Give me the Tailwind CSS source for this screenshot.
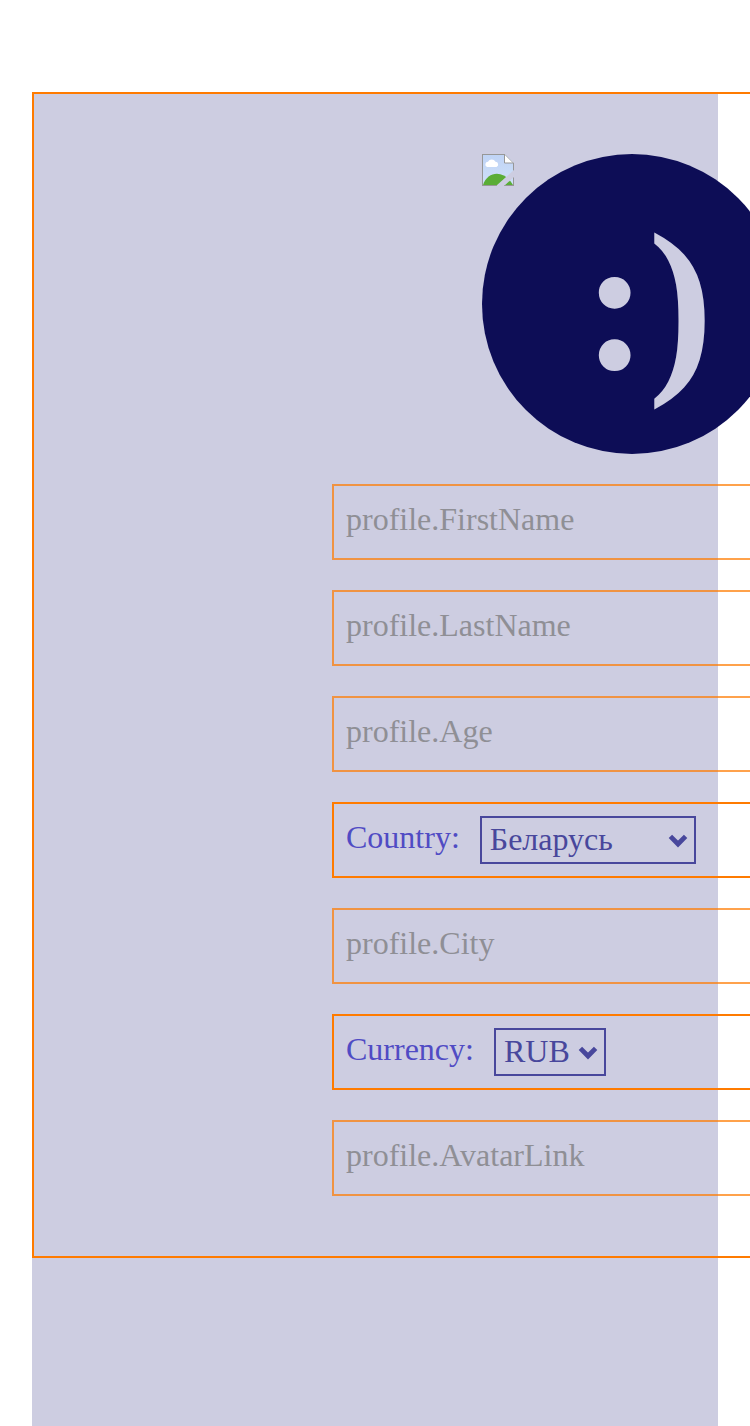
<!DOCTYPE html>
<html lang="en"><head><meta charset="utf-8"><title>Profile</title>
<script src="https://cdn.jsdelivr.net/npm/@tailwindcss/browser@4"></script></head>
<body class="bg-white overflow-hidden h-[1426px] font-['Liberation_Serif',serif] text-[32px] leading-[36px]">
<main class="ml-[32px] pt-[92px] w-[718px] h-[1426px] overflow-hidden bg-[linear-gradient(#cdcde1,#cdcde1)] bg-no-repeat bg-[position:0_92px] bg-[size:686px_1400px]">
<section class="w-[1200px] h-[1166px] border-2 border-[#ff7b00] pt-[60px] flex flex-col items-center gap-[30px]">
<div class="relative w-[300px] h-[300px] shrink-0">
<div class="w-[300px] h-[300px] rounded-full bg-[#0d0d56] text-[#cdcde1] flex items-center justify-center pl-8 pb-[5px]"><span class="font-bold text-[196px] leading-none">:)</span></div>
<svg class="absolute left-0 top-0" width="32" height="32" viewBox="0 0 32 32">
<defs><linearGradient id="sky" x1="0" y1="0" x2="0" y2="1"><stop offset="0" stop-color="#bfd3f5"/><stop offset="1" stop-color="#cfe1f9"/></linearGradient><clipPath id="page"><path d="M0 0H23L32 9V16L14 32H0ZM32 23V32H22Z"/></clipPath></defs>
<g clip-path="url(#page)"><path d="M0 0H32V32H0Z" fill="url(#sky)"/><path d="M5 13a2.700 2.700 0 0 1 1-5.200a4.200 4.200 0 0 1 7.500 0a2.700 2.700 0 0 1 1 5.200Z" fill="#fff"/><path d="M1 31C6 16 23 16 31 31V32H1Z" fill="#5aad36"/><path d="M22.500 0V9H32Z" fill="#fff"/><path d="M22.500 0V9H32M.5 0V32M0 .5H23L31.500 9V32M0 31.500H32" fill="none" stroke="#979797"/></g></svg>
</div>
<div class="w-[600px] h-[76px] shrink-0 border-2 border-[#ff7b00] opacity-70 px-3 pt-[15px] text-[#757575]">profile.FirstName</div>
<div class="w-[600px] h-[76px] shrink-0 border-2 border-[#ff7b00] opacity-70 px-3 pt-[15px] text-[#757575]">profile.LastName</div>
<div class="w-[600px] h-[76px] shrink-0 border-2 border-[#ff7b00] opacity-70 px-3 pt-[15px] text-[#757575]">profile.Age</div>
<div class="w-[600px] h-[76px] shrink-0 border-2 border-[#ff7b00] px-3 pt-3 flex items-start gap-5 text-[#504bc4]"><span class="pt-[3px]">Country:</span><div class="w-[216px] h-12 border-2 border-[#48479c] text-[#48479c] pl-2 pr-[6px] pt-[3px] flex justify-between"><span>Беларусь</span><svg class="mt-[12px]" width="20" height="16" viewBox="0 0 20 16" fill="none" stroke="currentColor" stroke-width="4.8"><path d="M2.400 3.400L10 11L17.600 3.400"/></svg></div></div>
<div class="w-[600px] h-[76px] shrink-0 border-2 border-[#ff7b00] opacity-70 px-3 pt-[15px] text-[#757575]">profile.City</div>
<div class="w-[600px] h-[76px] shrink-0 border-2 border-[#ff7b00] px-3 pt-3 flex items-start gap-5 text-[#504bc4]"><span class="pt-[3px]">Currency:</span><div class="w-[112px] h-12 border-2 border-[#48479c] text-[#48479c] pl-2 pr-[6px] pt-[3px] flex justify-between"><span>RUB</span><svg class="mt-[12px]" width="20" height="16" viewBox="0 0 20 16" fill="none" stroke="currentColor" stroke-width="4.8"><path d="M2.400 3.400L10 11L17.600 3.400"/></svg></div></div>
<div class="w-[600px] h-[76px] shrink-0 border-2 border-[#ff7b00] opacity-70 px-3 pt-[15px] text-[#757575]">profile.AvatarLink</div>
</section></main></body></html>
